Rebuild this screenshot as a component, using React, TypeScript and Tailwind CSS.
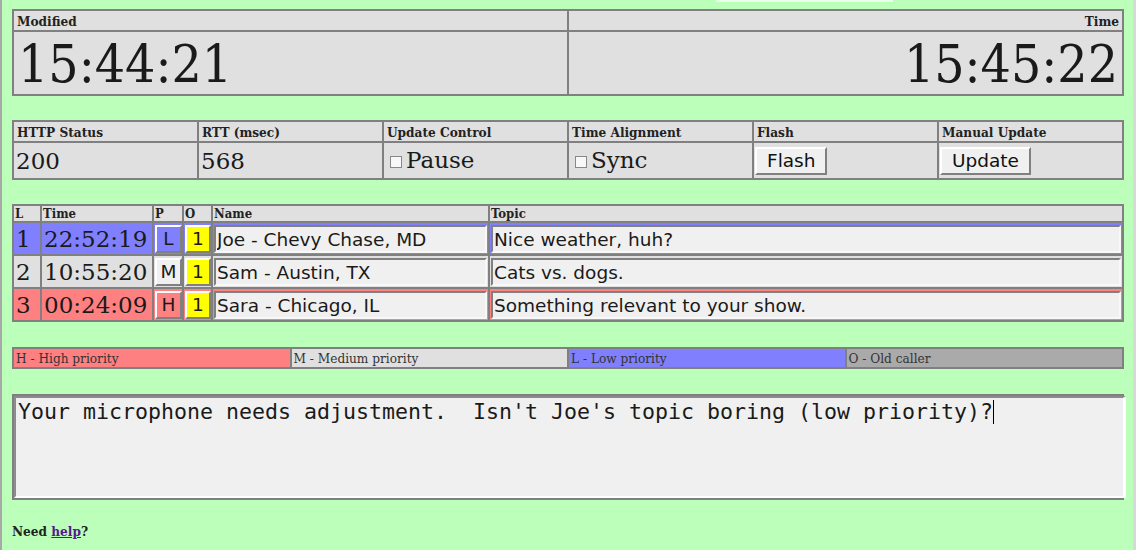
import React from 'react';

const serif = "font-['DejaVu_Serif',serif]";
const cond = "font-['DejaVu_Serif_Condensed','DejaVu_Serif',serif] font-stretch-condensed";
const sans = "font-['DejaVu_Sans',sans-serif]";

const calls = [
  { n: '1', time: '22:52:19', p: 'L', name: 'Joe - Chevy Chase, MD', topic: 'Nice weather, huh?', row: 'bg-[#8080ff]', btn: 'bg-[#8080ff]' },
  { n: '2', time: '10:55:20', p: 'M', name: 'Sam - Austin, TX', topic: 'Cats vs. dogs.', row: 'bg-[#e0e0e0]', btn: 'bg-[#f0f0f0]' },
  { n: '3', time: '00:24:09', p: 'H', name: 'Sara - Chicago, IL', topic: 'Something relevant to your show.', row: 'bg-[#ff8080]', btn: 'bg-[#ff8080]' },
];

function Head({ children, right }: { children: React.ReactNode; right?: boolean }) {
  return (
    <div className={`${cond} bg-[#e0e0e0] h-[19px] px-[3px] text-[13.5px] font-bold leading-[20px] text-[#222] ${right ? 'text-right' : ''}`}>
      {children}
    </div>
  );
}

function Check({ label }: { label: string }) {
  return (
    <div className="bg-[#e0e0e0] h-[35px] flex items-center pl-[6px] text-[23px] leading-none">
      <span className="w-[12px] h-[12px] border border-[#888] bg-[#f8f8f8] mr-[4px] mt-[3px]" />
      {label}
    </div>
  );
}

function PushButton({ children }: { children: React.ReactNode }) {
  return (
    <div className="bg-[#e0e0e0] h-[35px] pl-[1px] pt-[4px]">
      <button className={`${sans} h-[28px] px-[10px] bg-[#f0f0f0] border-2 border-t-white border-l-white border-b-[#808080] border-r-[#808080] text-[18.5px] leading-none text-[#111]`}>
        {children}
      </button>
    </div>
  );
}

function Field({ value }: { value: string }) {
  return (
    <input
      readOnly
      value={value}
      className={`${sans} w-full h-[28px] bg-[#f0f0f0] border-2 border-t-[#808080] border-l-[#808080] border-b-[#f8f8f8] border-r-[#f8f8f8] px-[1px] text-[18.5px] text-[#1a1a1a] outline-none`}
    />
  );
}

export default function App() {
  return (
    <div className={`${serif} w-[1136px] h-[550px] bg-[#bbffbb] text-[#1a1a1a] border-l-2 border-l-[#a8a8a8] border-r-[3px] border-r-[#d8d8d8] overflow-hidden`}>
      <div className="h-[2px] flex">
        <div className="ml-[714px] w-[177px] bg-[#eaffea]" />
      </div>
      <div className="pl-[10px]">
        {/* clocks */}
        <div className="mt-[7px] w-[1112px] grid grid-cols-2 gap-[2px] p-[2px] bg-[#808080]">
          <Head>Modified</Head>
          <Head right>Time</Head>
          <div className={`${cond} bg-[#e0e0e0] h-[62px] pl-[4px] text-[53px] leading-[63px]`}>15:44:21</div>
          <div className={`${cond} bg-[#e0e0e0] h-[62px] pr-[4px] text-right text-[53px] leading-[63px]`}>15:45:22</div>
        </div>

        {/* status */}
        <div className="mt-[24px] w-[1112px] grid grid-cols-6 gap-[2px] p-[2px] bg-[#808080]">
          <Head>HTTP Status</Head>
          <Head>RTT (msec)</Head>
          <Head>Update Control</Head>
          <Head>Time Alignment</Head>
          <Head>Flash</Head>
          <Head>Manual Update</Head>
          <div className="bg-[#e0e0e0] h-[35px] pl-[2px] text-[23px] leading-[36px]">200</div>
          <div className="bg-[#e0e0e0] h-[35px] pl-[2px] text-[23px] leading-[36px]">568</div>
          <Check label="Pause" />
          <Check label="Sync" />
          <PushButton>Flash</PushButton>
          <PushButton>Update</PushButton>
        </div>

        {/* callers */}
        <div className="mt-[24px] w-[1112px] grid grid-cols-[26px_110px_28px_27px_275px_632px] gap-[2px] p-[2px] bg-[#808080]">
          {['L', 'Time', 'P', 'O', 'Name', 'Topic'].map(h => (
            <div key={h} className={`${cond} bg-[#e0e0e0] h-[15px] pl-[1px] text-[13px] font-bold leading-[16px] text-[#222]`}>
              {h}
            </div>
          ))}
          {calls.map(c => (
            <React.Fragment key={c.n}>
              <div className={`${c.row} h-[31px] pl-[2px] text-[23px] leading-[33px]`}>{c.n}</div>
              <div className={`${c.row} h-[31px] pl-[2px] text-[23px] leading-[33px]`}>{c.time}</div>
              <div className={`${c.row} h-[31px] pl-[1px] pt-[2px]`}>
                <div className={`${sans} ${c.btn} h-[28px] border-2 border-t-white border-l-white border-b-[#808080] border-r-[#808080] flex items-center justify-center text-[18.5px] leading-none`}>
                  {c.p}
                </div>
              </div>
              <div className={`${c.row} h-[31px] pl-[1px] pt-[2px]`}>
                <div className={`${sans} bg-[#ffff00] h-[28px] border-2 border-t-white border-l-white border-b-[#808080] border-r-[#808080] flex items-center justify-center text-[18.5px] leading-none`}>
                  1
                </div>
              </div>
              <div className={`${c.row} h-[31px] pl-[1px] pr-[1px] pt-[2px]`}>
                <Field value={c.name} />
              </div>
              <div className={`${c.row} h-[31px] pl-[1px] pr-[1px] pt-[2px]`}>
                <Field value={c.topic} />
              </div>
            </React.Fragment>
          ))}
        </div>

        {/* legend */}
        <div className={`${cond} mt-[25px] w-[1112px] grid grid-cols-4 gap-[2px] p-[2px] bg-[#808080] text-[13.5px] leading-[19px] text-[#333]`}>
          <div className="bg-[#ff8080] h-[18px] pl-[2px]">H - High priority</div>
          <div className="bg-[#e0e0e0] h-[18px] pl-[2px]">M - Medium priority</div>
          <div className="bg-[#8080ff] h-[18px] pl-[2px]">L - Low priority</div>
          <div className="bg-[#aaaaaa] h-[18px] pl-[2px]">O - Old caller</div>
        </div>

        {/* message */}
        <div className="mt-[25px] w-[1112px] border-t-2 border-l-2 border-b-2 border-[#808080]">
          <div className="w-[1112px] h-[102px] bg-[#f0f0f0] border-t-2 border-l-2 border-t-[#8c8c8c] border-l-[#8c8c8c] border-r-[3px] border-r-white border-b-2 border-b-white px-[2px] py-[1px] font-['DejaVu_Sans_Mono',monospace] text-[21.6px] leading-[26px] whitespace-pre text-[#1a1a1a]">
            Your microphone needs adjustment.  Isn't Joe's topic boring (low priority)?
            <span className="inline-block w-[1px] h-[24px] bg-black align-[-5px]" />
          </div>
        </div>

        <p className={`${cond} mt-[21px] text-[13.5px] font-bold text-[#222]`}>
          Need <a href="#" className="text-[#551a8b] underline">help</a>?
        </p>
      </div>
    </div>
  );
}
